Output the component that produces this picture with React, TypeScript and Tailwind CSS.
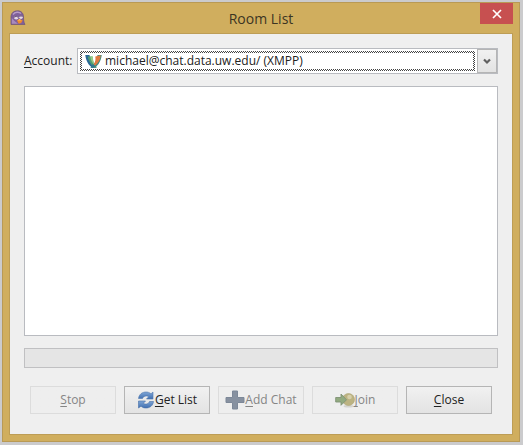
import type { ReactNode } from "react";

function PidginIcon() {
  return (
    <svg viewBox="0 0 16 16" className="h-4 w-4" aria-hidden="true">
      <path d="M1 14.500V6C1.500 2.500 4 .8 7.500.8 11.500.8 13.500 3.500 13.500 7c0 3 .2 5 1.500 7.500z" fill="#80609a" stroke="#6b5278" strokeWidth=".7" />
      <path d="M1.800 13.800V8l2.700 3 3.500 2.800z" fill="#a98bbd" />
      <path d="M3 4.500C5 1.800 9 1.500 11 3.500" stroke="#b79bc7" strokeWidth="1.400" fill="none" />
      <ellipse cx="6.200" cy="7.800" rx="2.200" ry="1.700" fill="#e6d9e8" />
      <ellipse cx="11" cy="7.200" rx="1.700" ry="1.700" fill="#e6d9e8" />
      <path d="M4.200 7.200q2-1.800 4 0M9.600 6.400q1.400-1.200 2.800 0" stroke="#5c4568" strokeWidth=".9" fill="none" />
      <path d="M7 10.600 9.300 9l3.400 1.400-1.600 2.600-2.400.7z" fill="#f08a2c" />
      <path d="M7.800 10.400 9.300 9l2.200 1.200z" fill="#ffd067" />
    </svg>
  );
}

function XmppIcon() {
  return (
    <svg viewBox="0 0 17 15" className="h-[15px] w-[17px]" aria-hidden="true">
      <path d="M.3 1H4.500C5 6 7.500 10 11.500 13.800H7.500C3.500 11.500.8 6.500.3 1z" fill="#2b6a96" />
      <path d="M2.800 2.500h4.700C7.500 6.500 9 10 12 13.500H9C6 10.500 3.500 7 2.800 2.500z" fill="#4f9f72" />
      <path d="M5.200 2.500H8C7.800 6 8.700 9 10.500 12 7.500 9.500 5.700 6.500 5.200 2.500z" fill="#98c985" />
      <path d="M16.700 1H12.500C12 6 9.500 10.500 5.500 13.800H9.500C13.500 11.500 16.200 6.500 16.700 1z" fill="#3f8b80" />
      <path d="M15.800 1.200 10.300 2.500c.5 3 0 5.500-1.500 8l1.200 1.200C13.500 9 15.500 5.500 15.800 1.200z" fill="#e07a40" />
      <path d="M7.800 10 10 12l-2 1.800H5.500z" fill="#2f7890" />
    </svg>
  );
}

function RefreshIcon() {
  return (
    <svg viewBox="0 0 18 18" className="h-[18px] w-[18px] shrink-0" aria-hidden="true">
      <defs>
        <linearGradient id="refresh-blue" x1="0" y1="0" x2="0" y2="1">
          <stop offset="0" stopColor="#7fa6d6" />
          <stop offset="1" stopColor="#416fb0" />
        </linearGradient>
      </defs>
      <path d="M1.500 7.500C2 3.500 5 1 9 1c2 0 3.500.5 5 1.800L16 1v7H9.500l2.200-2.300C10 4.200 6.500 4.800 5.500 7.500z" fill="url(#refresh-blue)" stroke="#5079ae" strokeWidth=".6" />
      <path d="M16.500 10.500C16 14.500 13 17 9 17c-2 0-3.500-.5-5-1.800L1.500 17v-7H8.500l-2.200 2.300c1.700 1.500 5.200.9 6.200-1.800z" fill="url(#refresh-blue)" stroke="#446ea8" strokeWidth=".6" />
    </svg>
  );
}

function PlusIcon() {
  return (
    <svg viewBox="0 0 20 20" className="h-5 w-5 shrink-0" aria-hidden="true">
      <path d="M7.500 1h5v6.500H19v5h-6.500V19h-5v-6.500H1v-5h6.500z" fill="#8791a0" stroke="#7d8898" />
    </svg>
  );
}

function JoinIcon() {
  return (
    <svg viewBox="0 0 20 16" className="h-4 w-5 shrink-0" aria-hidden="true">
      <ellipse cx="13.500" cy="14.300" rx="5" ry="1.200" fill="#d4d4d0" />
      <circle cx="13.500" cy="7.500" r="6" fill="#bcb382" stroke="#b2aa7c" strokeWidth=".7" />
      <circle cx="14.500" cy="5" r="2.300" fill="#d6cfaa" />
      <path d="M.7 5.500H6V2l5.500 5.800L6 13.300V10H.7z" fill="#92aa80" stroke="#7f9275" strokeWidth=".9" />
    </svg>
  );
}

type ActionProps = { letter: string; rest: string; icon?: ReactNode; disabled?: boolean };

function ActionButton({ letter, rest, icon, disabled }: ActionProps) {
  return (
    <button
      type="button"
      disabled={disabled}
      className="flex h-7 min-w-0 flex-1 items-center justify-center border border-[#b5b5b5] bg-linear-to-b from-[#f1f1f1] to-[#e3e3e3] whitespace-nowrap text-[#222222] disabled:border-[#dcdcdc] disabled:from-[#eeeeee] disabled:to-[#eeeeee] disabled:text-[#858585]"
    >
      {icon}
      <span>
        <span className="underline underline-offset-2">{letter}</span>
        {rest}
      </span>
    </button>
  );
}

export default function App() {
  return (
    <div className="flex min-h-screen flex-col bg-[#cbcbcd] pt-0.5 pr-[3px] pb-[3px] pl-0.5 font-['Open_Sans','Noto_Sans',sans-serif] text-xs text-[#222222]">
      <div className="flex flex-1 flex-col border border-[#b99a55] bg-[#d0ae5e] px-1.5 pb-1.5">
        <header className="grid h-[30px] grid-cols-[33px_1fr_33px] items-start">
          <div className="pt-[7px] pl-px">
            <PidginIcon />
          </div>
          <h1 className="pt-1 text-center text-sm leading-6 text-[#3c3523]">Room List</h1>
          <button type="button" aria-label="Close window" className="flex h-[21px] w-[33px] items-center justify-center bg-[#c75050]">
            <svg viewBox="0 0 10 10" className="h-2.5 w-2.5" aria-hidden="true">
              <path d="m1 1 8 8M9 1 1 9" stroke="#fff" strokeWidth="1.700" />
            </svg>
          </button>
        </header>

        <main className="flex flex-1 flex-col border border-[#bd9d55] bg-[#efefef] px-3.5 pt-3.5 pb-5">
          <div className="flex items-center">
            <label htmlFor="account" className="w-[53px] shrink-0 whitespace-nowrap">
              <span className="underline underline-offset-2">A</span>ccount:
            </label>
            <div className="relative h-[26px] flex-1 border border-[#b9bbc0] bg-white">
              <select
                id="account"
                className="h-6 w-full appearance-none bg-white pr-6 pl-[27px] text-xs leading-6 outline-none"
              >
                <option>michael@chat.data.uw.edu/ (XMPP)</option>
              </select>
              <span className="pointer-events-none absolute inset-y-0.5 right-[22px] left-0.5 bg-[repeating-conic-gradient(#444444_0_25%,#ffffff_0_50%)] bg-[length:2px_2px] p-0.5 [mask:linear-gradient(#000_0_0)_content-box_exclude,linear-gradient(#000_0_0)]" />
              <span className="pointer-events-none absolute top-[5px] left-[7px]">
                <XmppIcon />
              </span>
              <span className="pointer-events-none absolute inset-y-0 right-0 flex w-5 items-center justify-center border border-[#b5b5b5] bg-linear-to-b from-[#f1f1f1] to-[#e3e3e3]">
                <svg viewBox="0 0 8 7" className="h-[7px] w-2" aria-hidden="true">
                  <path d="m1 1.500 3 3 3-3" fill="none" stroke="#606060" strokeWidth="2.200" />
                </svg>
              </span>
            </div>
          </div>

          <section aria-label="Rooms" className="mt-3 min-h-[120px] flex-1 border border-[#b9bbc0] bg-white" />
          <div role="progressbar" aria-label="Loading rooms" className="mt-3 h-5 border border-[#c0c0c2] bg-[#e5e5e5]" />

          <div className="mt-[18px] flex gap-2 px-1.5">
            <ActionButton letter="S" rest="top" disabled />
            <ActionButton letter="G" rest="et List" icon={<RefreshIcon />} />
            <ActionButton letter="A" rest="dd Chat" icon={<PlusIcon />} disabled />
            <ActionButton letter="J" rest="oin" icon={<JoinIcon />} disabled />
            <ActionButton letter="C" rest="lose" />
          </div>
        </main>
      </div>
    </div>
  );
}
